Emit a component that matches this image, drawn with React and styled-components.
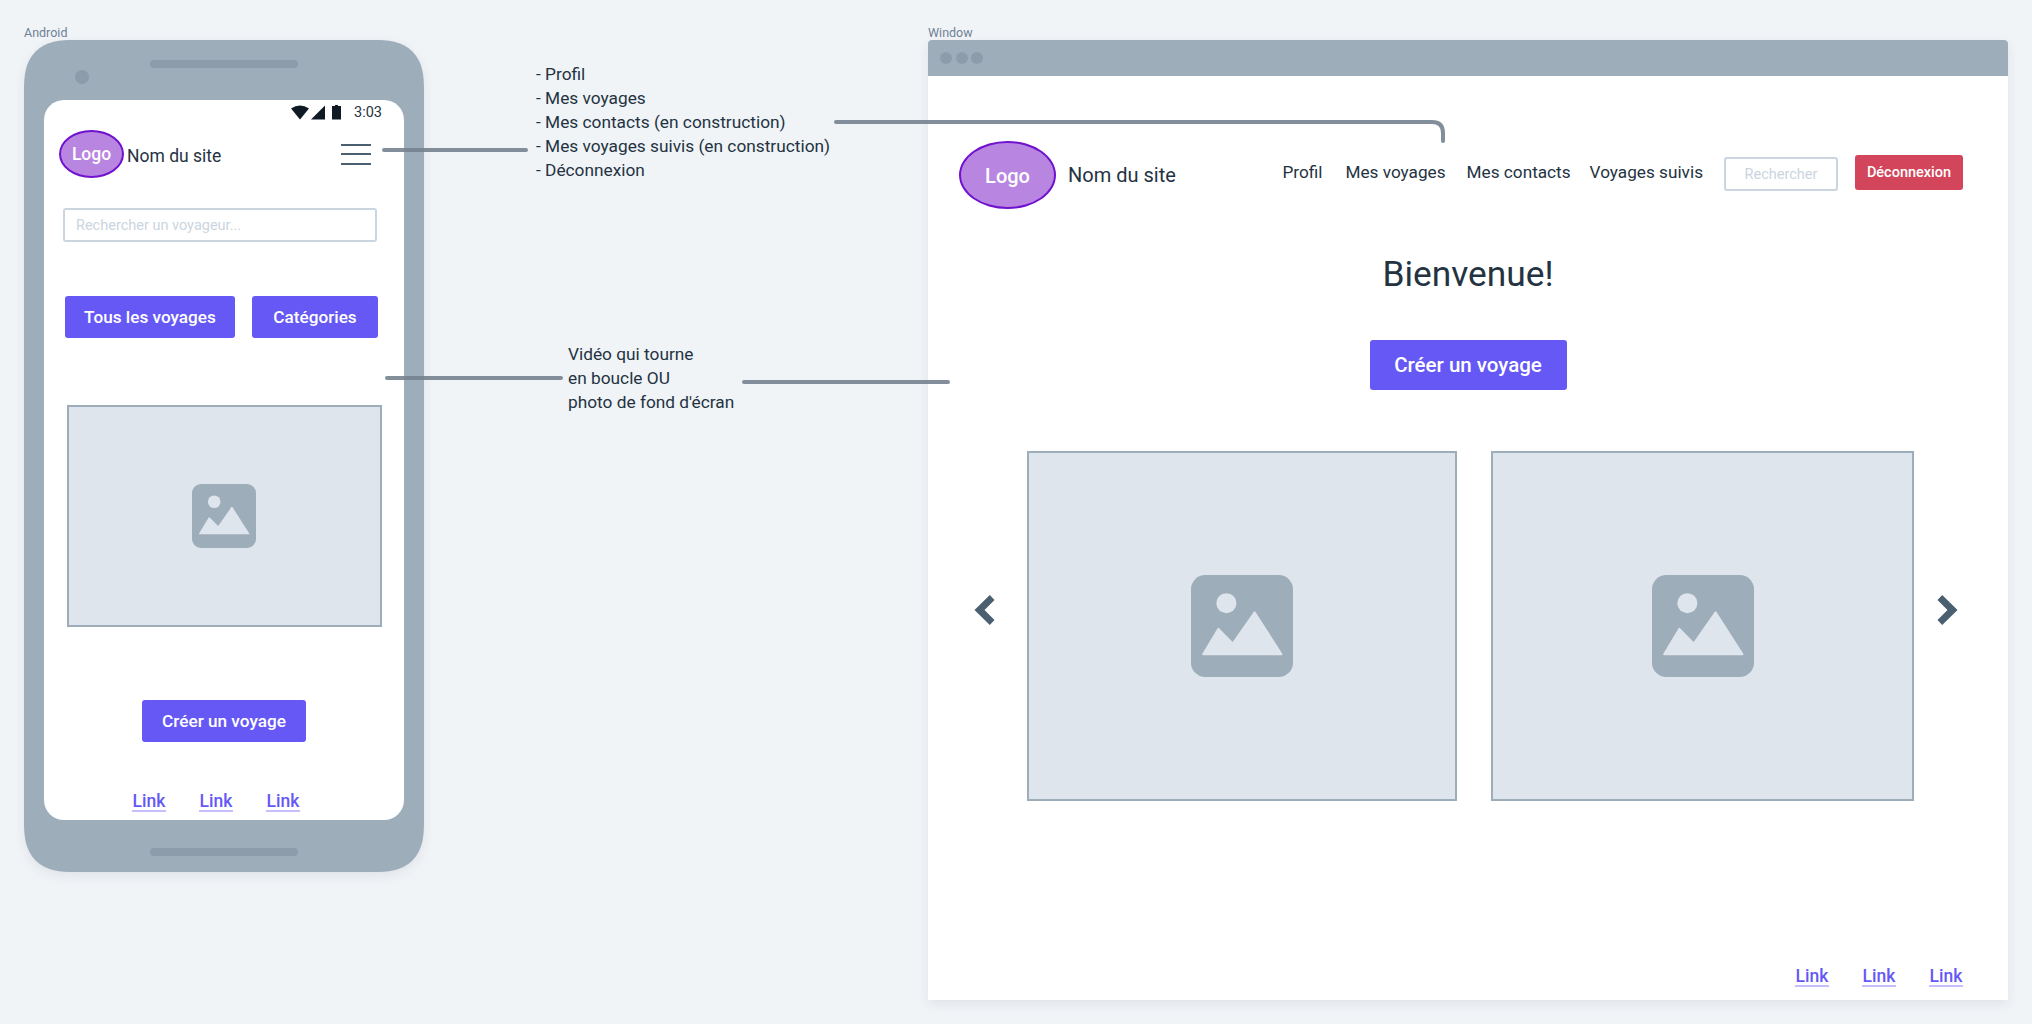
import React from "react";
import styled, { createGlobalStyle } from "styled-components";

const GlobalStyle = createGlobalStyle`
  html, body {
    margin: 0;
    height: 100%;
    background: #f0f4f7;
    overflow: hidden;
  }
  * {
    box-sizing: border-box;
  }
`;

const ImageIcon = ({ size }) => (
  <svg width={size} height={size} viewBox="0 0 64 64">
    <rect width="64" height="64" rx="9" fill="#9eadba" />
    <circle cx="22.2" cy="17.7" r="6.3" fill="#dfe5ed" />
    <path
      d="M7.6 49.7 L17.2 33.8 L26.2 43 L39.9 23.4 L56.8 49.7 Z"
      fill="#dfe5ed"
      stroke="#dfe5ed"
      strokeWidth="1.2"
      strokeLinejoin="round"
    />
  </svg>
);

const Chevron = ({ flip }) => (
  <svg width="21" height="30" viewBox="0 0 20 30">
    <path
      d={flip ? "M4.7 0 L0 5 L10 15 L0 25 L4.7 30 L20 15 Z" : "M15.3 0 L20 5 L10 15 L20 25 L15.3 30 L0 15 Z"}
      fill="#4a5f70"
    />
  </svg>
);

const App = () => (
  <>
    <GlobalStyle />
    <Canvas>
      <Frame>
        <FrameLabel>Android</FrameLabel>
        <Phone>
          <Speaker />
          <Camera />
          <Screen>
            <StatusBar>
              <svg width="36" height="15" viewBox="0 0 36 15">
                <path d="M0 3.5 Q9 -2.5 18 3.5 L9 14.5 Z" fill="#0f1a24" />
                <path d="M34 0.5 V14.5 H20 Z" fill="#0f1a24" />
              </svg>
              <Battery width="10" height="15" viewBox="0 0 10 15">
                <path d="M3 0 H6 V1 H9 V14.5 H0 V1 H3 Z" fill="#0f1a24" />
              </Battery>
              <Clock>3:03</Clock>
            </StatusBar>
            <PhoneHeader>
              <Logo $small>Logo</Logo>
              <SiteName $small>Nom du site</SiteName>
              <Burger>
                <span />
                <span />
                <span />
              </Burger>
            </PhoneHeader>
            <SearchBox $phone>Rechercher un voyageur...</SearchBox>
            <ButtonRow>
              <Button $w={170}>Tous les voyages</Button>
              <Button $w={126}>Catégories</Button>
            </ButtonRow>
            <PhonePicture>
              <ImageIcon size={64} />
            </PhonePicture>
            <PhoneCta>
              <Button $w={164}>Créer un voyage</Button>
            </PhoneCta>
            <PhoneLinks>
              <FooterLink>Link</FooterLink>
              <FooterLink>Link</FooterLink>
              <FooterLink>Link</FooterLink>
            </PhoneLinks>
          </Screen>
          <BottomSpeaker />
        </Phone>
      </Frame>

      <Notes>
        <NoteList>
          <p>- Profil</p>
          <p>- Mes voyages</p>
          <p>- Mes contacts (en construction)</p>
          <p>- Mes voyages suivis (en construction)</p>
          <p>- Déconnexion</p>
        </NoteList>
        <NoteVideo>
          <p>Vidéo qui tourne</p>
          <p>en boucle OU</p>
          <p>photo de fond d'écran</p>
        </NoteVideo>
      </Notes>

      <Frame>
        <FrameLabel>Window</FrameLabel>
        <Browser>
          <TitleBar>
            <Dot />
            <Dot />
            <Dot />
          </TitleBar>
          <BrowserBody>
            <NavBar>
              <Logo>Logo</Logo>
              <SiteName>Nom du site</SiteName>
              <Menu>
                <MenuItem $gap={23}>Profil</MenuItem>
                <MenuItem $gap={21}>Mes voyages</MenuItem>
                <MenuItem $gap={19}>Mes contacts</MenuItem>
                <MenuItem $gap={21}>Voyages suivis</MenuItem>
                <SearchBox>Rechercher</SearchBox>
                <LogoutButton>Déconnexion</LogoutButton>
              </Menu>
            </NavBar>
            <Welcome>Bienvenue!</Welcome>
            <HeroCta>
              <Button $w={197} $big>Créer un voyage</Button>
            </HeroCta>
            <Carousel>
              <ArrowSlot>
                <Chevron />
              </ArrowSlot>
              <Card $w={430} $ml={32}>
                <ImageIcon size={102} />
              </Card>
              <Card $w={423} $ml={34}>
                <ImageIcon size={102} />
              </Card>
              <ArrowSlot $ml={23}>
                <Chevron flip />
              </ArrowSlot>
            </Carousel>
            <BrowserLinks>
              <FooterLink>Link</FooterLink>
              <FooterLink>Link</FooterLink>
              <FooterLink>Link</FooterLink>
            </BrowserLinks>
          </BrowserBody>
        </Browser>
      </Frame>

      <Connectors viewBox="0 0 2032 1024">
        <path d="M384 150 H526" />
        <path d="M387 378 H561" />
        <path d="M744 382 H948" />
        <path d="M836 122 H1432 Q1443 122 1443 133 V141" />
      </Connectors>
    </Canvas>
  </>
);

const Canvas = styled.div`
  position: relative;
  display: flex;
  width: 2032px;
  height: 1024px;
  padding: 24px 0 0 24px;
  font-family: Roboto, "Liberation Sans", sans-serif;
  color: #243342;
`;

const Frame = styled.div`
  display: flex;
  flex-direction: column;
`;

const FrameLabel = styled.div`
  height: 16px;
  padding-top: 1px;
  font-size: 12.5px;
  line-height: 15px;
  color: #718096;
`;

const Phone = styled.div`
  position: relative;
  width: 400px;
  height: 832px;
  padding: 60px 20px 0;
  background: #9eadba;
  border-radius: 50px;
  corner-shape: superellipse(1.4);
  box-shadow: 0 4px 12px rgba(45, 55, 72, 0.08);
`;

const Speaker = styled.div`
  position: absolute;
  top: 20px;
  left: 126px;
  width: 148px;
  height: 8px;
  border-radius: 4px;
  background: #8c9cab;
`;

const BottomSpeaker = styled(Speaker)`
  top: 808px;
`;

const Camera = styled.div`
  position: absolute;
  top: 30px;
  left: 51px;
  width: 14px;
  height: 14px;
  border-radius: 50%;
  background: #8c9cab;
`;

const Screen = styled.div`
  width: 360px;
  height: 720px;
  background: #fff;
  border-radius: 20px;
  overflow: hidden;
`;

const StatusBar = styled.div`
  display: flex;
  align-items: flex-start;
  height: 30px;
  padding: 5px 0 0 247px;
`;

const Battery = styled.svg`
  margin-left: 5px;
`;

const Clock = styled.span`
  margin-left: 12px;
  font-size: 14.5px;
  line-height: 15px;
`;

const PhoneHeader = styled.div`
  display: flex;
  align-items: center;
  height: 48px;
  padding: 0 33px 0 15px;
`;

const Logo = styled.div`
  display: flex;
  align-items: center;
  justify-content: center;
  flex: none;
  width: ${(p) => (p.$small ? 65 : 97)}px;
  height: ${(p) => (p.$small ? 48 : 68)}px;
  padding-bottom: ${(p) => (p.$small ? 1 : 0)}px;
  padding-top: ${(p) => (p.$small ? 0 : 2)}px;
  border: 2px solid #7012ce;
  border-radius: 50%;
  background: #b886e0;
  color: #fff;
  font-size: ${(p) => (p.$small ? 17.5 : 20)}px;
  font-weight: 500;
`;

const SiteName = styled.div`
  margin-left: ${(p) => (p.$small ? 3 : 12)}px;
  padding-top: ${(p) => (p.$small ? 4 : 0)}px;
  font-size: ${(p) => (p.$small ? 17.5 : 20)}px;
`;

const Burger = styled.div`
  display: flex;
  flex-direction: column;
  gap: 7.5px;
  width: 30px;
  margin-left: auto;

  span {
    height: 2px;
    background: #4a5f70;
  }
`;

const SearchBox = styled.div`
  display: flex;
  align-items: center;
  width: ${(p) => (p.$phone ? 314 : 114)}px;
  height: 34px;
  margin-left: ${(p) => (p.$phone ? 19 : 0)}px;
  margin-top: ${(p) => (p.$phone ? 30 : 4)}px;
  padding-left: ${(p) => (p.$phone ? 11 : 0)}px;
  justify-content: ${(p) => (p.$phone ? "flex-start" : "center")};
  border: 2px solid #cbd5e0;
  border-radius: 3px;
  background: #fff;
  color: #cbd5e0;
  font-size: 14.5px;
`;

const ButtonRow = styled.div`
  display: flex;
  gap: 17px;
  margin: 54px 0 0 21px;
`;

const Button = styled.div`
  display: flex;
  align-items: center;
  justify-content: center;
  width: ${(p) => p.$w}px;
  height: ${(p) => (p.$big ? 50 : 42)}px;
  border-radius: 3px;
  background: #6558f5;
  color: #fff;
  font-size: ${(p) => (p.$big ? 20.5 : 17.2)}px;
  font-weight: 500;
`;

const Picture = styled.div`
  display: flex;
  align-items: center;
  justify-content: center;
  border: 2px solid #9eadba;
  background: #dfe5ed;
`;

const PhonePicture = styled(Picture)`
  width: 315px;
  height: 222px;
  margin: 67px 0 0 23px;
  padding-right: 2px;
`;

const PhoneCta = styled.div`
  display: flex;
  justify-content: center;
  margin-top: 73px;
`;

const PhoneLinks = styled.div`
  display: flex;
  gap: 33px;
  margin: 50px 0 0 88px;
`;

const FooterLink = styled.a`
  display: block;
  width: 34px;
  height: 20px;
  border-bottom: 2px solid #c5c0fb;
  text-align: center;
  color: #6558f5;
  font-size: 17.5px;
  line-height: 18px;
  font-weight: 500;
`;

const Notes = styled.div`
  display: flex;
  flex-direction: column;
  width: 504px;
  padding-top: 38px;
  font-size: 17.3px;
  line-height: 24px;

  p {
    margin: 0;
  }
`;

const NoteList = styled.div`
  margin-left: 112px;
  white-space: nowrap;
`;

const NoteVideo = styled.div`
  margin: 160px 0 0 144px;
  white-space: nowrap;
`;

const Browser = styled.div`
  width: 1080px;
  height: 960px;
  background: #fff;
  border-radius: 4px 4px 0 0;
  box-shadow: 0 4px 12px rgba(45, 55, 72, 0.08);
`;

const TitleBar = styled.div`
  display: flex;
  align-items: center;
  gap: 3.5px;
  height: 36px;
  padding-left: 12px;
  background: #9eadba;
  border-radius: 4px 4px 0 0;
`;

const Dot = styled.span`
  width: 12px;
  height: 12px;
  border-radius: 50%;
  background: #8c9cab;
`;

const BrowserBody = styled.div`
  display: flex;
  flex-direction: column;
  height: 924px;
`;

const NavBar = styled.div`
  display: flex;
  align-items: center;
  margin-top: 65px;
  padding: 0 45px 0 31px;
`;

const Menu = styled.div`
  display: flex;
  align-items: center;
  margin: -6px 0 0 auto;
`;

const MenuItem = styled.span`
  margin-right: ${(p) => p.$gap}px;
  font-size: 17.2px;
`;

const LogoutButton = styled.div`
  display: flex;
  align-items: center;
  justify-content: center;
  width: 108px;
  height: 35px;
  margin-left: 17px;
  border-radius: 3px;
  background: #d3455b;
  color: #fff;
  font-size: 14.5px;
  font-weight: 500;
`;

const Welcome = styled.h1`
  margin: 42px 0 0;
  text-align: center;
  font-size: 35.3px;
  line-height: 46px;
  font-weight: 400;
`;

const HeroCta = styled.div`
  display: flex;
  justify-content: center;
  margin-top: 43px;
`;

const Carousel = styled.div`
  display: flex;
  align-items: center;
  margin-top: 61px;
  padding-left: 46px;
`;

const ArrowSlot = styled.div`
  display: flex;
  margin: 0 0 32px ${(p) => p.$ml || 0}px;
`;

const Card = styled(Picture)`
  width: ${(p) => p.$w}px;
  height: 350px;
  margin-left: ${(p) => p.$ml}px;
`;

const BrowserLinks = styled.div`
  display: flex;
  justify-content: flex-end;
  gap: 33px;
  margin-top: auto;
  padding: 0 45px 13px 0;
`;

const Connectors = styled.svg`
  position: absolute;
  inset: 0;
  width: 2032px;
  height: 1024px;
  pointer-events: none;

  path {
    fill: none;
    stroke: #74828f;
    stroke-opacity: 0.9;
    stroke-width: 4px;
    stroke-linecap: round;
  }
`;

export default App;
